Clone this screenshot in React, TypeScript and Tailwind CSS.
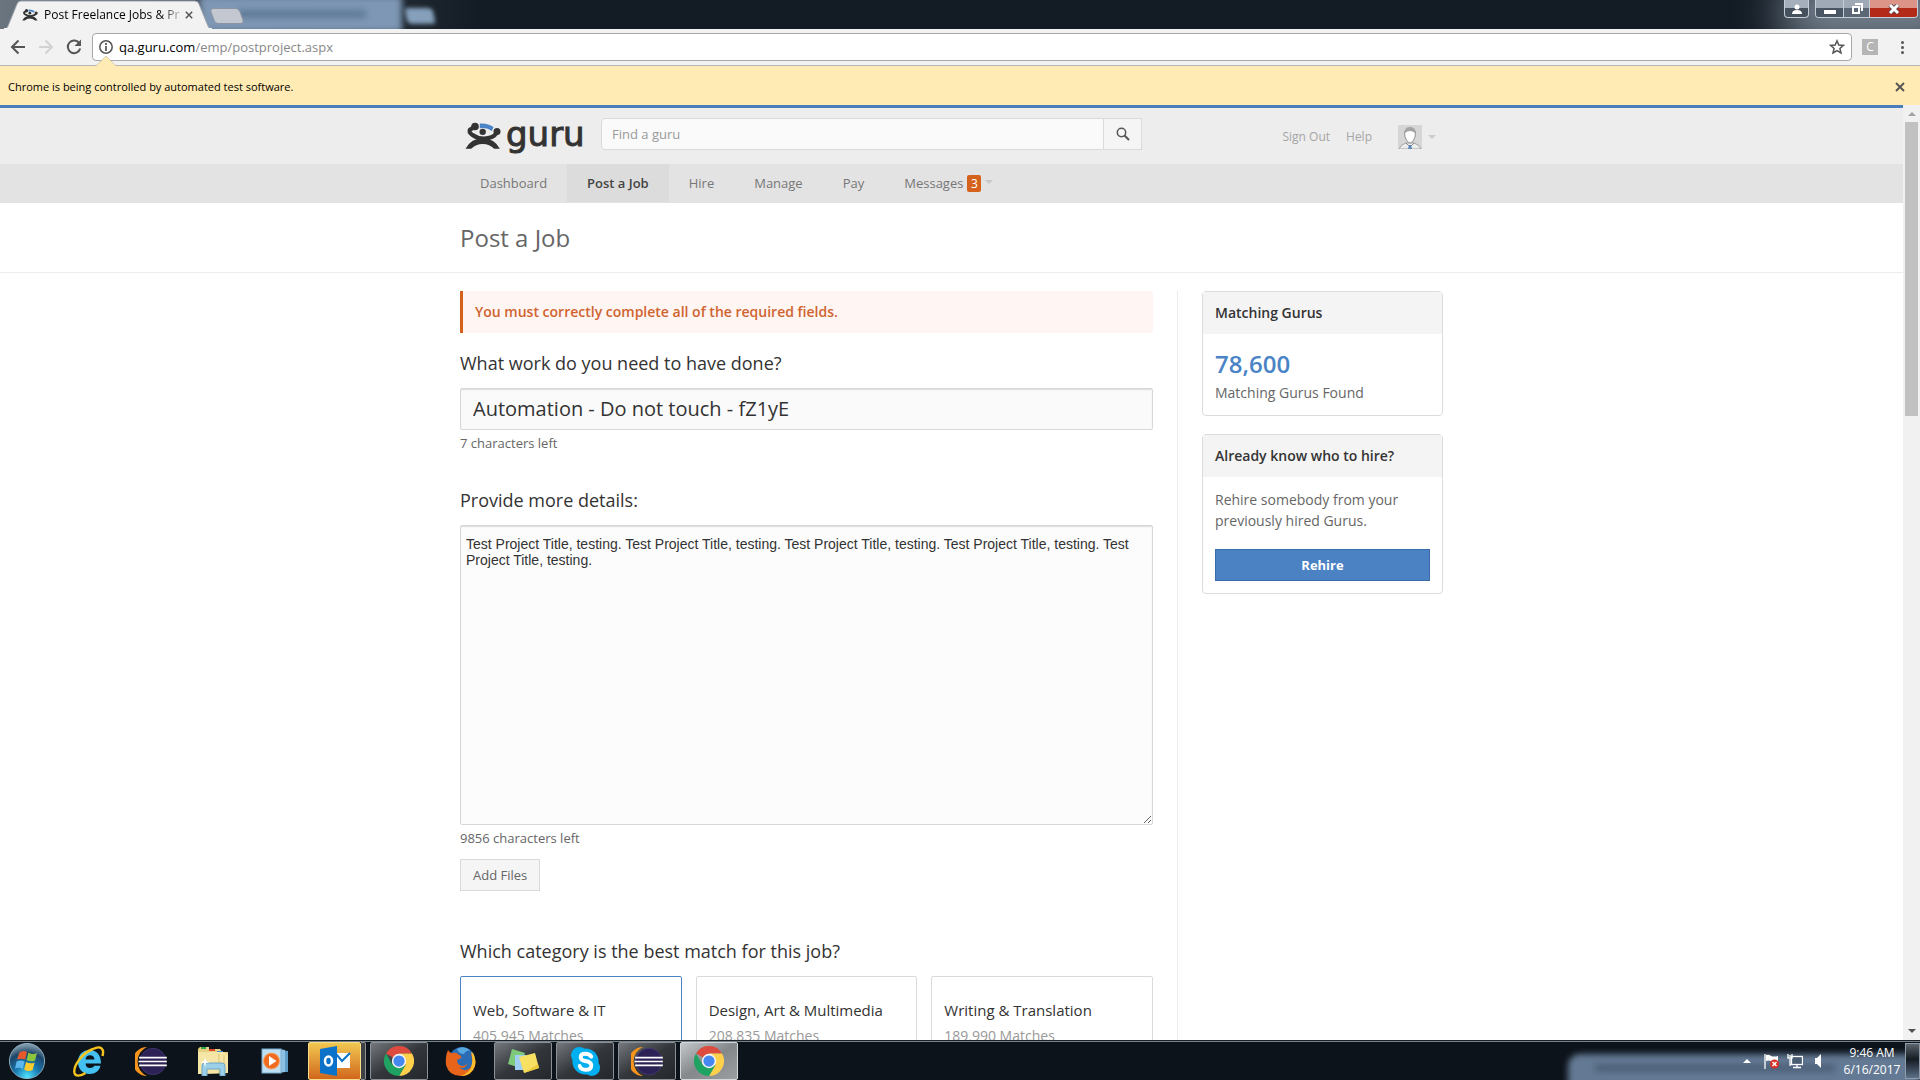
import React, { useId } from "react";

const UI_FONT = "font-['Open_Sans','Noto_Sans',sans-serif]";

/* ---------- Logos and icons ---------- */

function GuruMark({ className }: { className: string }) {
  return (
    <svg viewBox="24 26 114 88" className={className} aria-hidden="true">
      <path d="M71 31 Q94 28 114 42 L109 54 Q92 42 71 46 Z" fill="#4a84c6" />
      <circle cx="80" cy="57" r="10" fill="#333" />
      <circle cx="56" cy="40" r="12" fill="#333" />
      <circle cx="125" cy="56" r="11" fill="#333" />
      <path d="M54 42 L40 50 Q34 57 48 67 Q64 78 82 78 Q104 77 116 69 L128 56" fill="none" stroke="#333" strokeWidth="13" />
      <path d="M26 110 Q42 78 80 76 Q118 78 134 110 H116 Q102 95 80 95 Q58 95 44 110 Z" fill="#333" />
    </svg>
  );
}

function CloseX({ className }: { className: string }) {
  return (
    <svg viewBox="0 0 10 10" className={className} aria-hidden="true">
      <path d="M1 1 L9 9 M9 1 L1 9" stroke="#555" strokeWidth="1.9" fill="none" />
    </svg>
  );
}

function ChromeIcon() {
  return (
    <svg viewBox="0 0 48 48" className="size-[30px]" aria-hidden="true">
      <path d="M24 24 L3.2 12 A24 24 0 0 1 44.8 12 L24 12 Z" fill="#dd4b3e" />
      <path d="M44.8 12 A24 24 0 0 1 24 48 L34.4 30 L24 12 Z" fill="#fdd04b" />
      <path d="M3.2 12 A24 24 0 0 0 24 48 L34.4 30 L13.6 30 Z" fill="#1ea362" />
      <circle cx="24" cy="24" r="11.5" fill="#f4f4f4" />
      <circle cx="24" cy="24" r="9" fill="#4688f1" />
    </svg>
  );
}

function EclipseIcon() {
  return (
    <svg viewBox="0 0 48 44" className="h-[29px] w-8" aria-hidden="true">
      <path d="M18 0 A22 22 0 0 0 18 44 A24 24 0 0 1 18 0 Z" fill="#f7941e" />
      <circle cx="27" cy="22" r="20" fill="#2c2255" stroke="#4b3f80" strokeWidth="1" />
      <path d="M6 16 H48 M5 22 H48 M6 28 H48" stroke="#fff" strokeWidth="2.6" />
    </svg>
  );
}

function StartOrb() {
  const id = useId();
  return (
    <svg viewBox="0 0 40 40" className="size-[38px]" aria-hidden="true">
      <defs>
        <radialGradient id={id} cx="50%" cy="95%" r="90%">
          <stop offset="0" stopColor="#4fe3ff" />
          <stop offset=".4" stopColor="#1878b0" />
          <stop offset=".75" stopColor="#1c4468" />
          <stop offset="1" stopColor="#7d97a8" />
        </radialGradient>
      </defs>
      <circle cx="20" cy="20" r="18.5" fill={`url(#${id})`} stroke="#8fb3c6" strokeWidth="1" />
      <path d="M12 11 Q16 8 20 10.500 L18 18.500 Q14 16.500 9.500 18.500 Z" fill="#e8592b" />
      <path d="M21.500 11 Q26 14 30.500 11.500 L28.500 19.500 Q24 21.500 19.500 19 Z" fill="#8cc63f" />
      <path d="M9 20.500 Q13.500 18.500 17.500 20.500 L15.500 28.500 Q11.500 26 7.500 28 Z" fill="#5cb7ee" />
      <path d="M19 21 Q23.500 23.500 28 21.500 L26 29.500 Q21.500 32 17 29 Z" fill="#fdcb2e" />
    </svg>
  );
}

function IeIcon() {
  return (
    <svg viewBox="0 0 32 32" className="size-[32px]" aria-hidden="true">
      <path
        d="M16.500 5 C23.500 5 28 10 28 18.500 H12.500 C12.700 21.500 14.500 23 17 23 C19 23 20.500 22.300 21.300 20.800 H27.500 C26 26.500 22 29 16.800 29 C10 29 5 24.500 5 17 C5 9.800 10 5 16.500 5 Z M12.500 14.500 H21.500 C21.300 11.800 19.700 10.300 17 10.300 C14.500 10.300 12.800 11.800 12.500 14.500 Z"
        fill="#45c1f1"
      />
      <path
        d="M29.500 11 C31.500 4 28 0 20 4 M20 4 C9 8 0 21 1.500 28 C2.500 32 8 31 12.500 28"
        fill="none"
        stroke="#f6c41d"
        strokeWidth="2.400"
      />
    </svg>
  );
}

function ExplorerIcon() {
  return (
    <svg viewBox="0 0 32 30" className="h-[30px] w-8" aria-hidden="true">
      <path d="M1 3 L3 1 H12 V3 H23 L25 6 H31 V27 L1 28 Z" fill="#e8cf80" />
      <rect x="4" y="1" width="5" height="2" fill="#2fa84f" />
      <rect x="12" y="3" width="6" height="2" fill="#d9482b" />
      <rect x="20" y="5" width="6" height="2" fill="#3b8ede" />
      <path d="M1 6 H27 L31 9 V27 L1 28 Z" fill="#f6e6a6" />
      <path d="M22 8 V27 M27 9 V27" stroke="#dcc57b" strokeWidth="1" />
      <path d="M5 30 V20 Q5 17 8 17 H25 Q28 17 28 20 V30 H23 V23 H10 V30 Z" fill="#9ccfe8" stroke="#6ba6c8" strokeWidth="1" />
      <path d="M8 11 L9 15 L13 16 L9 17 L8 21 L7 17 L3 16 L7 15 Z" fill="#fff" />
    </svg>
  );
}

function MediaPlayerIcon() {
  return (
    <svg viewBox="0 0 28 26" className="h-[26px] w-7" aria-hidden="true">
      <path d="M20 2 L27 3 V24 L20 24 Z" fill="#5e9cc8" />
      <path d="M18 1 L24 2 V24 L18 25 Z" fill="#8fc1e2" />
      <rect x="1" y="1" width="19" height="24" fill="#bfdff2" stroke="#78aed2" />
      <circle cx="10.500" cy="13" r="8" fill="#ef6b1f" stroke="#f8a96c" />
      <path d="M8 8 L15.500 13 L8 18 Z" fill="#fff" />
    </svg>
  );
}

function OutlookIcon() {
  return (
    <svg viewBox="0 0 32 32" className="size-8" aria-hidden="true">
      <path d="M16 8 H31 V23 H16 Z" fill="#fff" />
      <path d="M17 9 L23 16 L31 8" fill="none" stroke="#0a72c8" strokeWidth="2" />
      <path d="M1 4 L18 1 V31 L1 28 Z" fill="#0a72c8" />
      <ellipse cx="9.500" cy="16" rx="3.500" ry="4.500" fill="none" stroke="#fff" strokeWidth="2.500" />
    </svg>
  );
}

function FirefoxIcon() {
  return (
    <svg viewBox="0 0 32 32" className="size-8" aria-hidden="true">
      <circle cx="17" cy="15" r="13" fill="#2b6cb5" />
      <path d="M12 4 Q18 0 25 5 Q20 6 19 9 Q14 9 12 4 Z" fill="#58a9e0" />
      <path
        d="M3 5 Q5 9 8 8 Q12 7 14 10 Q17 11 16 13 L12 15 Q12 20 17 21 Q21 21 23 18 Q20 25 14 22 Q19 28 25 23 Q29 18 26 9 Q32 14 30 21 Q27 31 16 31 Q4 31 1 20 Q0 12 3 5 Z"
        fill="#e8641b"
      />
      <path d="M28 8 Q33 17 28 25 Q23 31 16 31 Q26 27 27 19 Q28 13 26 7 Z" fill="#fbbf2d" />
    </svg>
  );
}

function StickyNotesIcon() {
  return (
    <svg viewBox="0 0 32 26" className="h-[26px] w-8" aria-hidden="true">
      <path d="M5 1 L18 5 L13 20 L1 16 Z" fill="#7ec97a" />
      <path d="M8 7 H19 V22 H8 Z" fill="#9fd0f2" />
      <path d="M12 9 L28 5 L32 20 L17 25 Z" fill="#f8e063" />
      <path d="M17 25 L32 20 L31 16 Z" fill="#ecca3a" />
    </svg>
  );
}

function SkypeIcon() {
  return (
    <svg viewBox="0 0 32 32" className="size-[31px]" aria-hidden="true">
      <circle cx="16" cy="16" r="13.500" fill="#00aff0" />
      <circle cx="9.500" cy="9.500" r="8.500" fill="#00aff0" />
      <circle cx="22.500" cy="22.500" r="8.500" fill="#00aff0" />
      <path
        d="M22 11 Q20 8 16 8 Q11 8 11 11.500 Q11 14.500 16 15.500 Q22 16.500 22 20 Q22 24.500 16 24.500 Q11 24.500 10 20.500"
        fill="none"
        stroke="#fff"
        strokeWidth="4"
        strokeLinecap="round"
      />
    </svg>
  );
}

function AvatarIcon() {
  return (
    <svg viewBox="0 0 24 24" className="size-6" aria-hidden="true">
      <rect width="24" height="24" fill="#d6d6d6" />
      <path d="M1 24 Q3 19 8 18 H16 Q21 19 23 24 Z" fill="#ececec" stroke="#a2a2a2" />
      <path d="M7 12 Q5 3 12 3 Q19 3 17 12 Q15 18 12 18 Q9 18 7 12 Z" fill="#fff" stroke="#8f8f8f" />
      <path d="M7 8 Q6 2 12 2 Q18 2 17 8 Q12 4 7 8 Z" fill="#a5a5a5" />
      <path d="M8 18 L12 22 L16 18" fill="none" stroke="#8f8f8f" />
      <path d="M11 20 H13 L14 24 H10 Z" fill="#5c86b8" />
    </svg>
  );
}

/* ---------- Browser window ---------- */

function WindowButtons() {
  return (
    <div className="relative mr-0.5 flex items-start gap-1.5">
      <button
        aria-label="Profile"
        className="flex h-[18px] w-[25px] items-center justify-center rounded-b border border-t-0 border-[#c5cdd6] bg-linear-to-b from-[#a5afbb] from-45% to-[#46515e] to-50%"
      >
        <svg viewBox="0 0 10 10" className="size-2.5" aria-hidden="true">
          <circle cx="5" cy="3" r="2.500" fill="#fff" />
          <path d="M0 10 Q0 6 5 6 Q10 6 10 10 Z" fill="#fff" />
        </svg>
      </button>
      <div className="flex h-[18px] overflow-hidden rounded-b border border-t-0 border-[#c5cdd6]">
        <button
          aria-label="Minimize"
          className="flex w-7 items-center justify-center border-r border-[#c5cdd6] bg-linear-to-b from-[#a0aab6] from-45% to-[#4b5664] to-50%"
        >
          <span className="mt-1.5 h-1 w-3 bg-white shadow-[0_0_1px_#333]" />
        </button>
        <button
          aria-label="Restore"
          className="flex w-[26px] items-center justify-center border-r border-[#c5cdd6] bg-linear-to-b from-[#a0aab6] from-45% to-[#5b6775] to-50%"
        >
          <svg viewBox="0 0 12 12" className="size-3" aria-hidden="true">
            <path d="M4 1 H11 V8" fill="none" stroke="#fff" strokeWidth="2" />
            <path d="M2 4 H8 V10 H2 Z" fill="none" stroke="#fff" strokeWidth="2" />
          </svg>
        </button>
        <button
          aria-label="Close window"
          className="flex w-[47px] items-center justify-center bg-linear-to-b from-[#dc9488] from-45% to-[#b32a18] to-50%"
        >
          <svg viewBox="0 0 12 10" className="h-2.5 w-3" aria-hidden="true">
            <path d="M2 1 L10 9 M10 1 L2 9" stroke="#4a3d46" strokeWidth="4.500" />
            <path d="M2 1 L10 9 M10 1 L2 9" stroke="#fff" strokeWidth="3" />
          </svg>
        </button>
      </div>
    </div>
  );
}

function TitleBar() {
  return (
    <header className="relative flex h-[29px] shrink-0 justify-between overflow-hidden bg-linear-to-r from-[#6b7580] via-[#131b24] via-25% to-[#131b24]">
      <div className="absolute -top-1 left-[200px] h-9 w-[202px] bg-[#7d97b4] blur-[3px]" />
      <div className="absolute top-2.5 left-[238px] h-2 w-32 bg-[#5f7a98] blur-[3px]" />
      <div className="absolute top-2 left-[406px] h-4 w-7 skew-x-12 rounded bg-[#86a0bb] blur-[2px]" />
      <div className="absolute -right-10 -bottom-4 h-16 w-44 bg-[#7e8b98] blur-xl" />
      <div className="relative flex">
        <div className="relative flex h-full w-[212px] items-center pl-[22px]">
          <svg viewBox="0 0 212 29" className="absolute inset-0 h-full w-full" aria-hidden="true">
            <path d="M4 29 Q7 29 8 26 L17 4 Q18 1 21 1 H195 Q198 1 199 4 L208 26 Q209 29 212 29 Z" fill="#f2f2f2" stroke="#9aa3ad" />
            <path d="M4 29 H212" stroke="#f2f2f2" strokeWidth="2" />
          </svg>
          <GuruMark className="relative h-3.5 w-4" />
          <span className="relative ml-1.5 w-[138px] bg-linear-to-r from-black from-80% to-[#ccc] bg-clip-text text-xs whitespace-nowrap text-transparent">
            Post Freelance Jobs &amp; Pr
          </span>
          <button aria-label="Close tab" className="relative ml-[3px]">
            <CloseX className="size-2" />
          </button>
        </div>
        <button
          aria-label="New tab"
          className="mt-2 h-4 w-[30px] skew-x-[20deg] rounded-sm border border-[#8a94a3] bg-[#c3c7d0]"
        />
      </div>
      <WindowButtons />
    </header>
  );
}

function Toolbar() {
  return (
    <div className="relative flex h-9 shrink-0 items-center bg-[#f2f2f2] pr-[15px] pl-2.5">
      <button aria-label="Back" className="flex size-4 items-center justify-center">
        <svg viewBox="0 0 16 16" className="size-4" aria-hidden="true">
          <path d="M15 8 H2 M8.500 1.500 L2 8 L8.500 14.500" fill="none" stroke="#555" strokeWidth="2" />
        </svg>
      </button>
      <button aria-label="Forward" className="ml-3 flex size-4 items-center justify-center">
        <svg viewBox="0 0 16 16" className="size-4" aria-hidden="true">
          <path d="M1 8 H14 M7.500 1.500 L14 8 L7.500 14.500" fill="none" stroke="#d2d2d2" strokeWidth="2" />
        </svg>
      </button>
      <button aria-label="Reload" className="ml-3 flex size-4 items-center justify-center">
        <svg viewBox="0 0 16 16" className="size-4" aria-hidden="true">
          <path d="M13.500 4.500 A6.300 6.300 0 1 0 14.200 9.500" fill="none" stroke="#555" strokeWidth="2" />
          <path d="M15 0.500 V7 H8.500 Z" fill="#555" />
        </svg>
      </button>
      <div className="ml-2.5 flex h-7 flex-1 items-center rounded-sm border border-[#a8a8a8] bg-white px-1.5">
        <svg viewBox="0 0 14 14" className="size-3.5" aria-hidden="true">
          <circle cx="7" cy="7" r="6.200" fill="none" stroke="#555" strokeWidth="1.500" />
          <path d="M7 6 V11 M7 3 V5" stroke="#555" strokeWidth="1.700" />
        </svg>
        <div className="ml-1.5 flex-1 text-[13px] leading-5 text-[#888]">
          <span className="text-black">qa.guru.com</span>/emp/postproject.aspx
        </div>
        <button aria-label="Bookmark this page">
          <svg viewBox="0 0 16 16" className="size-4" aria-hidden="true">
            <path
              d="M8 1.800 L9.800 6 L14.400 6.400 L10.900 9.400 L12 13.900 L8 11.500 L4 13.900 L5.100 9.400 L1.600 6.400 L6.200 6 Z"
              fill="none"
              stroke="#555"
              strokeWidth="1.500"
            />
          </svg>
        </button>
      </div>
      <button aria-label="Extension" className="ml-2.5 size-4 bg-[#b5b5b5] text-xs leading-4 text-white">
        C
      </button>
      <button aria-label="Menu" className="ml-[21px] flex w-1.5 flex-col items-center gap-0.5">
        <span className="size-[3px] rounded-full bg-[#555]" />
        <span className="size-[3px] rounded-full bg-[#555]" />
        <span className="size-[3px] rounded-full bg-[#555]" />
      </button>
      <svg viewBox="0 0 20 10" className="absolute -bottom-px left-24 z-10 h-2.5 w-5" aria-hidden="true">
        <path d="M0 10 L10 0 L20 10 Z" fill="#ffebb3" />
        <path d="M0 10 L10 0 L20 10" fill="none" stroke="#c5bda4" strokeWidth="0.700" />
      </svg>
    </div>
  );
}

function InfoBar() {
  return (
    <div className="flex h-10 shrink-0 items-center justify-between border-t border-[#b6b4b6] bg-[#ffebb3] pt-1 pr-[15px] pb-0.5 pl-2 text-black">
      <p className="text-[11px] leading-4">Chrome is being controlled by automated test software.</p>
      <button aria-label="Dismiss">
        <CloseX className="size-2.5" />
      </button>
    </div>
  );
}

/* ---------- Site ---------- */

const NAV = ["Dashboard", "Post a Job", "Hire", "Manage", "Pay"];

function SiteHeader() {
  return (
    <div className="border-t-[3px] border-[#4a7ebb] bg-[#ededed]">
      <div className="mx-auto flex h-14 max-w-[983px] items-start">
        <a href="#home" aria-label="Guru home" className="mt-3.5 ml-1 flex w-[137px] items-start gap-1">
          <GuruMark className="h-7 w-[38px]" />
          <span className="-mt-1.5 font-['DejaVu_Sans',sans-serif] text-[34px] leading-9 text-[#333] [-webkit-text-stroke:1px_#333]">
            guru
          </span>
        </a>
        <form className="mt-2.5 flex h-8 w-[541px]" onSubmit={(e) => e.preventDefault()}>
          <input
            aria-label="Find a guru"
            placeholder="Find a guru"
            className="min-w-0 flex-1 rounded-l border border-[#dadada] bg-[#fafafa] px-2.5 pt-px text-[13px] placeholder:text-[#999]"
          />
          <button aria-label="Search" className="flex w-[38px] items-center justify-center border border-l-0 border-[#dadada] bg-[#f5f5f5]">
            <svg viewBox="0 0 14 14" className="size-3.5" aria-hidden="true">
              <circle cx="5.500" cy="5.500" r="4.200" fill="none" stroke="#555" strokeWidth="1.500" />
              <path d="M8.500 8.500 L13 13" stroke="#555" strokeWidth="2" />
            </svg>
          </button>
        </form>
        <div className="mt-[17px] ml-auto flex h-6 items-center pr-[7px] text-xs text-[#a5a5a5]">
          <a href="#signout">Sign Out</a>
          <a href="#help" className="ml-4">
            Help
          </a>
          <button aria-label="Account menu" className="ml-[26px] flex items-center gap-1.5">
            <AvatarIcon />
            <span className="border-x-4 border-t-4 border-x-transparent border-t-[#ccc]" />
          </button>
        </div>
      </div>
      <nav className="bg-[#e3e3e3]">
        <div className="mx-auto flex h-[39px] max-w-[983px] text-[13px] leading-[38px] text-[#777]">
          {NAV.map((label) =>
            label === "Post a Job" ? (
              <a key={label} href="#post" aria-current="page" className="h-[38px] bg-[#dcdcdc] px-5 font-semibold text-[#444]">
                {label}
              </a>
            ) : (
              <a key={label} href={"#" + label.toLowerCase()} className="px-5">
                {label}
              </a>
            ),
          )}
          <a href="#messages" className="flex h-[38px] items-center px-5">
            Messages
            <span className="ml-1 h-[17px] w-3.5 rounded-xs bg-[#d4621d] text-center text-xs leading-[17px] text-white">3</span>
            <span className="mb-0.5 ml-1 border-x-4 border-t-4 border-x-transparent border-t-[#c8c8c8]" />
          </a>
        </div>
      </nav>
    </div>
  );
}

const CATEGORIES = [
  { name: "Web, Software & IT", matches: "405,945 Matches", selected: true },
  { name: "Design, Art & Multimedia", matches: "208,835 Matches", selected: false },
  { name: "Writing & Translation", matches: "189,990 Matches", selected: false },
];

function JobForm() {
  return (
    <form className="flex min-w-0 flex-1 flex-col border-r border-[#ececec] pr-6" onSubmit={(e) => e.preventDefault()}>
      <p role="alert" className="h-[42px] border-l-[3px] border-[#d4621d] bg-[#fff5f2] pl-3 text-sm leading-[42px] font-semibold text-[#cf6430]">
        You must correctly complete all of the required fields.
      </p>
      <label htmlFor="title" className="mt-[18px] text-lg leading-6 text-[#333]">
        What work do you need to have done?
      </label>
      <input
        id="title"
        defaultValue="Automation - Do not touch - fZ1yE"
        className="mt-[13px] h-[42px] rounded-xs border border-[#d8d8d8] bg-[#fafafa] px-3 pb-px text-xl text-[#333] shadow-[inset_0_1px_1px_#ddd]"
      />
      <p className="mt-[3px] text-[13px] leading-5 text-[#666]">7 characters left</p>
      <label htmlFor="details" className="mt-[35px] text-lg leading-6 text-[#333]">
        Provide more details:
      </label>
      <textarea
        id="details"
        defaultValue="Test Project Title, testing. Test Project Title, testing. Test Project Title, testing. Test Project Title, testing. Test Project Title, testing."
        className="mt-[13px] h-[300px] resize-y rounded-xs border border-[#d8d8d8] bg-[#fcfcfc] px-[5px] py-2.5 font-['Liberation_Sans',Arial,sans-serif] text-sm leading-4 text-[#333] shadow-[inset_0_1px_1px_#ddd]"
      />
      <p className="mt-[3px] text-[13px] leading-5 text-[#666]">9856 characters left</p>
      <button className="mt-[11px] h-8 self-start border border-[#dadada] bg-[#f5f5f5] px-3 pt-px text-[13px] text-[#666]">
        Add Files
      </button>
      <h2 className="mt-12 text-lg leading-6 text-[#333]">Which category is the best match for this job?</h2>
      <div className="mt-[13px] grid grid-cols-3 gap-3.5">
        {CATEGORIES.map((c) => (
          <button
            key={c.name}
            aria-pressed={c.selected}
            className={
              c.selected
                ? "flex h-[100px] flex-col gap-0.5 rounded-xs border border-[#4a84c6] px-3 pt-[21px] text-left"
                : "flex h-[100px] flex-col gap-0.5 rounded-xs border border-[#dadada] px-3 pt-[21px] text-left"
            }
          >
            <span className="text-[15px] leading-6 text-[#333]">{c.name}</span>
            <span className="text-sm leading-6 text-[#999]">{c.matches}</span>
          </button>
        ))}
      </div>
    </form>
  );
}

function Sidebar() {
  return (
    <aside className="ml-6 flex w-[241px] flex-col gap-[18px] self-start text-sm text-[#666]">
      <section className="rounded-sm border border-[#dcdcdc]">
        <h2 className="bg-[#f4f4f4] px-3 leading-[42px] font-semibold text-[#333]">Matching Gurus</h2>
        <div className="px-3 pt-[14px] pb-2.5">
          <p className="mb-px text-2xl leading-8 font-semibold text-[#4a84c6]">78,600</p>
          <p className="leading-6">Matching Gurus Found</p>
        </div>
      </section>
      <section className="rounded-sm border border-[#dcdcdc]">
        <h2 className="bg-[#f4f4f4] px-3 leading-[42px] font-semibold text-[#333]">Already know who to hire?</h2>
        <div className="px-3 pt-3 pb-3">
          <p className="leading-[21px]">Rehire somebody from your previously hired Gurus.</p>
          <button className="mt-[18px] h-8 w-full border border-[#396ca8] bg-[#4a82c4] text-[13px] font-bold text-white">Rehire</button>
        </div>
      </section>
    </aside>
  );
}

function Scrollbar() {
  return (
    <div className="flex w-[17px] shrink-0 flex-col items-center bg-[#f1f1f1]" aria-hidden="true">
      <span className="mt-[7px] mb-1.5 border-x-4 border-b-4 border-x-transparent border-b-[#a3a3a3]" />
      <span className="h-[294px] w-[13px] bg-[#c1c1c1]" />
      <span className="mt-auto mb-[7px] border-x-4 border-t-4 border-x-transparent border-t-[#505050]" />
    </div>
  );
}

/* ---------- Taskbar ---------- */

const TASK_BUTTON =
  "flex h-full w-[58px] items-center justify-center rounded-xs border border-[#8d9196] bg-linear-to-br from-[#75787c] via-[#33373c] via-50% to-[#24282d]";
const TASK_ACTIVE =
  "flex h-full w-[58px] items-center justify-center rounded-xs border border-[#d5d8da] bg-linear-to-br from-[#c5c8ca] via-[#85888b] via-50% to-[#9c9fa1]";
const TASK_ATTENTION =
  "flex h-full w-[53px] items-center justify-center rounded-xs border border-[#f7dc8c] bg-linear-to-b from-[#f0c850] to-[#d0661c]";
const TASK_PLAIN = "flex h-full w-[58px] items-center justify-center";

const TASKS = [
  { name: "Internet Explorer", icon: <IeIcon />, style: TASK_PLAIN },
  { name: "Eclipse", icon: <EclipseIcon />, style: TASK_PLAIN },
  { name: "Windows Explorer", icon: <ExplorerIcon />, style: TASK_PLAIN },
  { name: "Media Player", icon: <MediaPlayerIcon />, style: TASK_PLAIN },
  { name: "Outlook", icon: <OutlookIcon />, style: TASK_ATTENTION },
  { name: "Chrome", icon: <ChromeIcon />, style: TASK_BUTTON },
  { name: "Firefox", icon: <FirefoxIcon />, style: TASK_PLAIN },
  { name: "Sticky Notes", icon: <StickyNotesIcon />, style: TASK_BUTTON },
  { name: "Skype", icon: <SkypeIcon />, style: TASK_BUTTON },
  { name: "Eclipse window", icon: <EclipseIcon />, style: TASK_BUTTON },
  { name: "Chrome test window", icon: <ChromeIcon />, style: TASK_ACTIVE },
];

function Taskbar() {
  return (
    <footer className="relative flex h-10 shrink-0 overflow-hidden border-t border-[#1c2227] bg-[#0d131b] text-white shadow-[inset_0_1px_0_#76828a]">
      <div className="absolute right-0 -bottom-2 h-[34px] w-[352px] rounded-tl-xl bg-[#647a94] blur-[3px]" />
      <div className="absolute right-[85px] bottom-2 h-2 w-60 bg-[#4d6079] blur-[3px]" />
      <button aria-label="Start" className="ml-2 flex w-[38px] items-center justify-center">
        <StartOrb />
      </button>
      <div className="ml-3.5 flex gap-1 pt-px">
        {TASKS.map((t) => (
          <React.Fragment key={t.name}>
            <button aria-label={t.name} className={t.style}>
              {t.icon}
            </button>
            {t.name === "Outlook" && <span className="-ml-1 w-[5px] rounded-r-xs border border-l-0 border-[#8d9196] bg-[#3d4146]" />}
          </React.Fragment>
        ))}
      </div>
      <div className="relative ml-auto flex items-center">
        <svg viewBox="0 0 8 4" className="h-1 w-2" aria-hidden="true">
          <path d="M0 4 L4 0 L8 4 Z" fill="#fff" />
        </svg>
        <svg viewBox="0 0 16 16" className="ml-3 size-4" aria-hidden="true">
          <path d="M2 1 V16" stroke="#fff" strokeWidth="1.300" />
          <path d="M3 2 Q6 1 8 3 Q11 4 15 3 V9 Q11 10 8 8 Q6 7 3 8 Z" fill="#fff" />
          <circle cx="11.500" cy="11" r="4.500" fill="#d93025" />
          <path d="M9.500 9 L13.500 13 M13.500 9 L9.500 13" stroke="#fff" strokeWidth="1.500" />
        </svg>
        <svg viewBox="0 0 16 16" className="ml-2 size-4" aria-hidden="true">
          <rect x="4.500" y="3.500" width="11" height="8" fill="#4a5d72" stroke="#fff" strokeWidth="1.300" />
          <path d="M6 14.500 H14 M10 12 V14 M3 6 V12 H4 M1 1 V5 H5 V1 M3 2 V4" fill="none" stroke="#fff" strokeWidth="1.300" />
        </svg>
        <svg viewBox="0 0 16 16" className="ml-2 size-4" aria-hidden="true">
          <path d="M4 5 H6 L10 1 V15 L6 11 H4 Z" fill="#fff" />
        </svg>
        <div className="ml-3.5 w-[62px] text-center text-xs leading-[17px] whitespace-nowrap">
          <p>9:46 AM</p>
          <p>6/16/2017</p>
        </div>
        <button
          aria-label="Show desktop"
          className="mt-0.5 ml-0.5 h-9 w-[15px] self-start border border-[#8d9aa8] bg-linear-to-b from-[#5c646c] via-[#161c24] via-45% to-[#5d7189]"
        />
      </div>
    </footer>
  );
}

export default function App() {
  return (
    <div className={`flex h-screen flex-col overflow-hidden bg-white ${UI_FONT}`}>
      <TitleBar />
      <Toolbar />
      <InfoBar />
      <div className="flex min-h-0 flex-1">
        <main className="min-w-0 flex-1 overflow-hidden">
          <SiteHeader />
          <div className="border-b border-[#ececec]">
            <h1 className="mx-auto max-w-[983px] pt-[19px] pb-[18px] text-2xl leading-8 text-[#666]">Post a Job</h1>
          </div>
          <div className="mx-auto flex max-w-[983px] pt-[18px]">
            <JobForm />
            <Sidebar />
          </div>
        </main>
        <Scrollbar />
      </div>
      <Taskbar />
    </div>
  );
}
